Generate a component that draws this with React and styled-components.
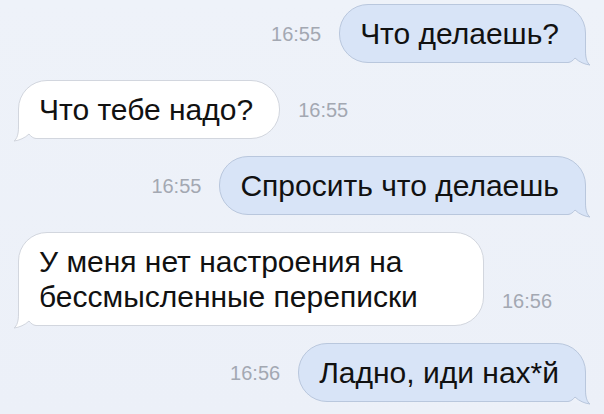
import React from 'react';
import styled, { createGlobalStyle } from 'styled-components';

const PAGE_BG = '#edf1f9';

const themes = {
    out: { fill: '#d8e4f7', border: '#b9c7dd' },
    in: { fill: '#ffffff', border: '#d2d6de' },
};

const messages = [
    { side: 'out', text: 'Что делаешь?', time: '16:55' },
    { side: 'in', text: 'Что тебе надо?', time: '16:55' },
    { side: 'out', text: 'Спросить что делаешь', time: '16:55' },
    { side: 'in', text: 'У меня нет настроения на бессмысленные переписки', time: '16:56', bottom: true },
    { side: 'out', text: 'Ладно, иди нах*й', time: '16:56' },
];

const Global = createGlobalStyle`
    html, body {
        margin: 0;
        padding: 0;
        background: ${PAGE_BG};
    }
    body {
        font-family: "Liberation Sans", Arial, sans-serif;
        -webkit-font-smoothing: antialiased;
    }
`;

// tail drawn over the square corner of the bubble, origin of the corner is (32, 26)
const Tail = ({ side }) => {
    const { fill, border } = themes[side];
    const edge = 'L31.5 14 C31.5 21 33 26 36 28 C31 27.5 25 25 21 21 C19 23.5 17 25.2 14 25.5';
    const outline = `M31.5 8 ${edge} L12 25.5`;
    const body = `M12 8 L31.5 8 ${edge} L12 25.5 Z`;
    const notch = 'M36 28 C31 27.5 25 25 21 21 C19 23.5 17 25.2 14 25.5 L14 26.6 L36 28.6 Z';

    return (
        <TailSvg side={side} width="40" height="30" viewBox="0 0 40 30">
            <path d={body} fill={fill} />
            <path d={notch} fill={PAGE_BG} />
            <path d={outline} fill="none" stroke={border} strokeWidth="1" />
        </TailSvg>
    );
};

const App = () => {
    return (
        <>
            <Global />
            <Chat>
                {messages.map((m, i) => (
                    <Row key={i} side={m.side} bottom={m.bottom}>
                        <Bubble side={m.side}>
                            <Tail side={m.side} />
                            <Text>{m.text}</Text>
                        </Bubble>
                        <Time bottom={m.bottom}>{m.time}</Time>
                    </Row>
                ))}
            </Chat>
        </>
    );
};

export default App;

const Chat = styled.div`
    width: 604px;
    height: 414px;
    box-sizing: border-box;
    padding: 4px 18px 0 18px;
    display: flex;
    flex-direction: column;
    gap: 17px;
    overflow: hidden;
    background: linear-gradient(180deg, #eef2f9 0%, #ecf0f8 100%);
`;

const Row = styled.div`
    display: flex;
    flex-direction: ${({ side }) => side === 'out' ? 'row-reverse' : 'row'};
    align-items: ${({ bottom }) => bottom ? 'flex-end' : 'center'};
    gap: 18px;
`;

const Bubble = styled.div`
    position: relative;
    max-width: 418px;
    padding: 11px 26px 11px 20px;
    font-size: 30px;
    line-height: 35px;
    color: #111;
    background: ${({ side }) => themes[side].fill};
    border: 1px solid ${({ side }) => themes[side].border};
    border-radius: 29px;
    ${({ side }) => side === 'out'
        ? 'border-bottom-right-radius: 0;'
        : 'border-bottom-left-radius: 0;'}
`;

const Text = styled.span`
    position: relative;
    z-index: 1;
`;

const TailSvg = styled.svg`
    position: absolute;
    bottom: -5px;
    overflow: visible;
    pointer-events: none;
    ${({ side }) => side === 'out'
        ? 'right: -9px;'
        : 'left: -9px; transform: scaleX(-1);'}
`;

const Time = styled.span`
    font-size: 20px;
    line-height: 20px;
    color: #a3a8b2;
    margin-bottom: ${({ bottom }) => bottom ? '15px' : '0'};
`;
